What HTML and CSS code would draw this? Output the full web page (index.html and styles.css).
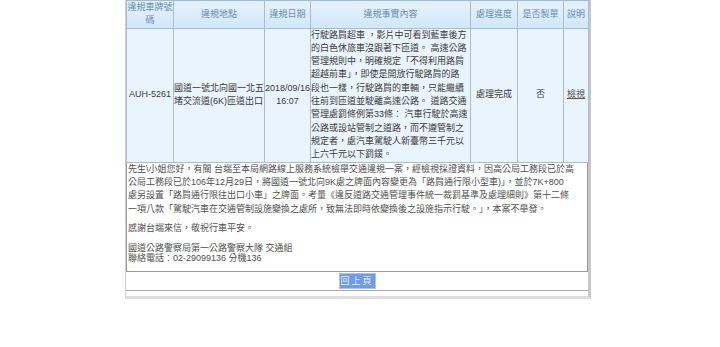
FILE: index.html
```html
<!DOCTYPE html>
<html lang="zh-Hant">
<head>
  <meta charset="UTF-8">
  <meta name="viewport" content="width=device-width, initial-scale=1.0">
  <title>違規檢舉查詢結果</title>
  <link rel="stylesheet" href="styles.css">
</head>
<body>

<div class="page">
  <div class="panel">
    <table class="case-table">
      <colgroup>
        <col class="c-plate">
        <col class="c-place">
        <col class="c-date">
        <col class="c-fact">
        <col class="c-state">
        <col class="c-ticket">
        <col class="c-note">
      </colgroup>
      <tr>
        <th>違規車牌號<br>碼</th>
        <th>違規地點</th>
        <th>違規日期</th>
        <th>違規事實內容</th>
        <th>處理進度</th>
        <th>是否製單</th>
        <th>說明</th>
      </tr>
      <tr>
        <td class="center">AUH-5261</td>
        <td class="nowrap">國道一號北向國一北五<br>堵交流道(6K)匝道出口</td>
        <td class="center nowrap">2018/09/16<br>16:07</td>
        <td class="nowrap">行駛路肩超車 ，影片中可看到藍車後方<br>的白色休旅車沒跟著下匝道。 高速公路<br>管理規則中，明確規定「不得利用路肩<br>超越前車」，即使是開放行駛路肩的路<br>段也一樣，行駛路肩的車輛，只能繼續<br>往前到匝道並駛離高速公路。 道路交通<br>管理處罰條例第33條： 汽車行駛於高速<br>公路或設站管制之道路，而不遵管制之<br>規定者，處汽車駕駛人新臺幣三千元以<br>上六千元以下罰鍰。</td>
        <td class="center">處理完成</td>
        <td class="center">否</td>
        <td class="center"><a href="#">檢視</a></td>
      </tr>
    </table>

    <div class="reply">
      <p class="reply-main">先生\小姐您好，有關 台端至本局網路線上服務系統檢舉交通違規一案，經檢視採證資料，因高公局工務段已於高<br>公局工務段已於106年12月29日，將國道一號北向9K處之牌面內容變更為「路肩通行限小型車)」，並於7K+800<br>處另設置「路肩通行限往出口小車」之牌面。考量《違反道路交通管理事件統一裁罰基準及處理細則》第十二條<br>一項八款「駕駛汽車在交通管制設施變換之處所，致無法即時依變換後之設施指示行駛。」，本案不舉發。</p>
      <p class="reply-thanks">感謝台端來信，敬祝行車平安。</p>
      <p class="reply-sign">國道公路警察局第一公路警察大隊 交通組<br>聯絡電話：02-29099136 分機136</p>
    </div>

    <div class="actions">
      <button class="back-btn" type="button">回上頁</button>
    </div>
  </div>
</div>

</body>
</html>
```

FILE: styles.css
```css
body {
  margin: 0;
  padding: 0;
  background-color: #fff;
  font-family: "Liberation Sans", "Noto Sans CJK TC", sans-serif;
  font-size: 9px;
  color: #3c3c3c;
}
.page {
  margin-left: 125px;
  width: 466px;
}
.panel {
  padding-bottom: 5px;
  border-left: 1px solid #cfcfcf;
  border-right: 3px solid #c6c6c6;
  border-bottom: 3px solid #dedede;
}
.case-table {
  width: 462px;
  table-layout: fixed;
  border-collapse: collapse;
}
.c-plate { width: 47px; }
.c-place { width: 91px; }
.c-date { width: 46px; }
.c-fact { width: 160px; }
.c-state { width: 47px; }
.c-ticket { width: 46px; }
.c-note { width: 25px; }
.case-table th,
.case-table td {
  border: 1px solid #a9bccd;
  padding: 0;
  line-height: 13.3px;
  font-weight: 400;
  overflow: hidden;
}
.case-table th {
  height: 26px;
  color: #6a8db3;
  text-align: center;
  background: linear-gradient(#e4f1fc, #d2e7f8);
}
.case-table td {
  background-color: #e9f4fd;
  text-align: left;
  vertical-align: middle;
}
.case-table td.center {
  text-align: center;
}
.case-table td.nowrap {
  white-space: nowrap;
}
.case-table a {
  color: #555;
  text-decoration: underline;
}
.reply {
  border: 1px solid #9a9a9a;
  border-top: none;
  padding: 0 1px 7px;
  color: #505050;
}
.reply p {
  margin: 0;
}
.reply-main {
  line-height: 13.4px;
  white-space: nowrap;
}
.reply-thanks {
  line-height: 10.5px;
  padding-top: 7px;
}
.reply-sign {
  line-height: 10.5px;
  padding-top: 9px;
}
.actions {
  height: 18px;
  border-bottom: 1px solid #aaa;
  display: flex;
  justify-content: center;
  align-items: center;
}
.back-btn {
  width: 37px;
  height: 16px;
  padding: 0;
  border: 1px solid #a8c2ee;
  background-color: #6f9ce8;
  color: #e2ebfb;
  font-family: "Liberation Sans", "Noto Sans CJK TC", sans-serif;
  font-size: 9px;
  letter-spacing: 2px;
  line-height: 14px;
}
```
